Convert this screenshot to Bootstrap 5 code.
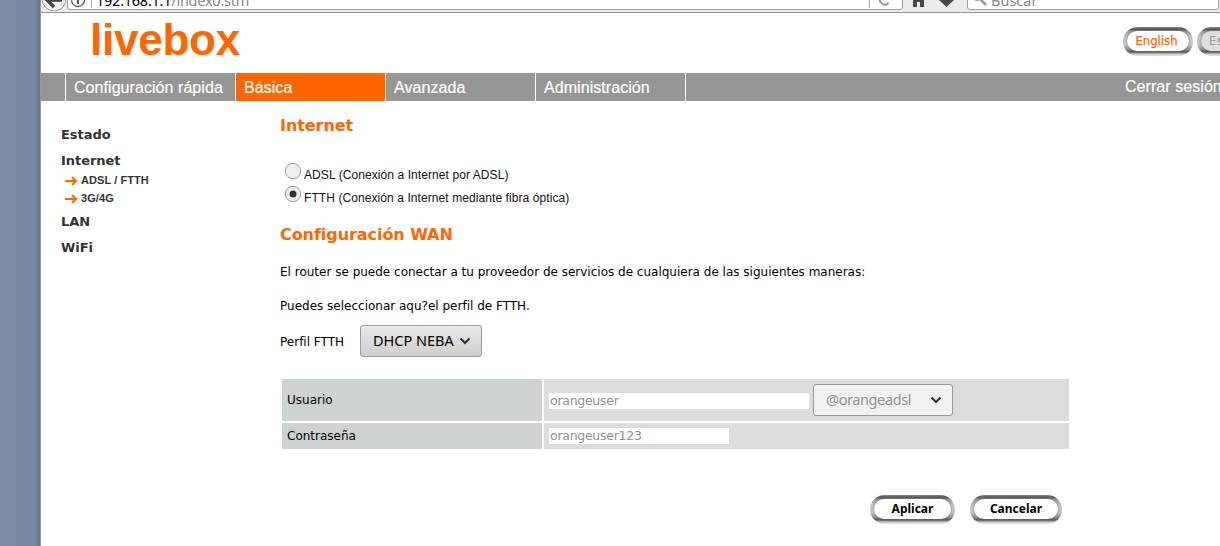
<!DOCTYPE html>
<html lang="es">
<head>
<meta charset="utf-8">
<title>livebox</title>
<link href="https://cdn.jsdelivr.net/npm/bootstrap@5.3.0/dist/css/bootstrap.min.css" rel="stylesheet">
<style>
body{height:546px;overflow:hidden;background:linear-gradient(90deg,#7b8ca8 0,#7788a2 34px,#697990 40px);font-family:"DejaVu Sans",sans-serif;font-size:12px;color:#000;line-height:16px}
.window{margin-left:40px;width:1180px;height:546px;border-left:1px solid #9a9a9a;background:#fff;overflow:hidden}
.chrome{height:13px;overflow:hidden;background:#ebebe9;border-bottom:1px solid #929292}
.bar-row{height:36px;margin-top:-25px;font:14.5px/30px "Noto Sans",sans-serif;color:#888}
.field{height:35px;background:#fff;border:1px solid #a0a09c;border-radius:3px;padding-top:9px}
.addr{margin-left:-7px;letter-spacing:-.25px}
.head{height:60px;padding-left:49px}
.logo{font:bold 44px/50px "Liberation Sans",sans-serif;color:#f60;letter-spacing:-.25px;padding-top:2px}
.pill{height:29px;border-radius:15px;background:linear-gradient(#888 0,#555 8%,#999 16%,#c4c4c4 35%,#c4c4c4 62%,#888 78%,#555 86%,#c4c4c4 93%,#e6e6e6);padding:4px 4px 5px}
.pill span{display:block;height:20px;border-radius:10px;background:#fff;line-height:20px;text-align:center;box-shadow:0 0 2px #666}
.lang{font-size:11.7px;margin:14px -47px 0 0;gap:4px}
.lang .pill{width:70px}
.lang .here{color:#f60;-webkit-text-stroke:.25px #f60;padding-right:3px}
.lang .other{background:#dedede;color:#999}
.menubar{height:28px;background:#969696;font:16px/30px "Liberation Sans",sans-serif;color:#fff;margin-left:-1px;letter-spacing:.06px;-webkit-text-stroke:.2px #fff}
.menubar a{color:#fff;text-decoration:none;width:150px;padding-left:8px;border-right:1px solid #fff;white-space:nowrap}
.menubar a:first-of-type{width:170px}
.menubar .edge{width:26px;border-right:1px solid #fff}
.menubar a.on{background:#f60}
.menubar .exit{width:95px;line-height:28px}
.side{width:239px;padding:21px 0 0 20px;color:#333}
.side .top-item{font-weight:bold;font-size:13px;height:26px;line-height:26px;letter-spacing:-.05px}
.side .subs{margin:-3px 0 2px 4px}
.side .sub-item{font:bold 11px/18px "Liberation Sans",sans-serif;height:18px;letter-spacing:.07px}
.main{width:790px}
h2{font-size:16px;font-weight:bold;color:#f60;margin:0;line-height:20px;letter-spacing:-.06px}
.choice{height:23px;font:12px/23px "Liberation Sans",sans-serif;padding-left:5px;color:#111;letter-spacing:.08px}
.choice svg{margin-right:2px}
.choice span{padding-top:5px}
.combo{height:32px;border:1px solid #9a9a98;border-radius:3px;background:linear-gradient(#e9e9e8,#cececd);font:14.5px/28px "Noto Sans",sans-serif;padding:0 10px 0 12px}
.combo span{padding-bottom:2px}
.combo.off{background:#f0f0f0;color:#929595;letter-spacing:-.4px}
.grid-rows{width:787px;margin:22px 0 0 2px;gap:2px}
.lab{width:260px;background:#ced2d1;padding-left:5px}
.val{width:525px;background:#dcdcdc;padding-left:5px}
.box{height:16px;background:#fff;color:#8d9191;font-size:12.5px;line-height:16px;padding-left:1px;letter-spacing:-.27px}
.act{font:bold 12px/20px "Noto Sans",sans-serif;color:#000;margin-top:46px;gap:15px;padding-right:8px}
</style>
</head>
<body>
<div class="window">
 <div class="chrome"><div class="bar-row d-flex">
  <svg width="26" height="36" viewBox="0 0 26 36"><circle cx="13" cy="24" r="12" fill="#f0f0ef" stroke="#999"/><path d="M13 18l-7 7 7 7M6 25h15" stroke="#444" stroke-width="3.4" fill="none"/></svg>
  <div class="field d-flex" style="width:836px">
   <svg width="35" height="26" viewBox="0 0 35 26" class="flex-shrink-0"><circle cx="10" cy="15" r="6.500" fill="none" stroke="#555" stroke-width="1.300"/><path d="M10 12v7" stroke="#555" stroke-width="2"/><path d="M23.500 0v23" stroke="#aaa"/></svg>
   <div class="addr"><span class="text-black">192.168.1.1</span>/index0.stm</div>
   <svg class="ms-auto" width="35" height="26" viewBox="0 0 35 26"><path d="M2.500 0v23" stroke="#aaa"/><path d="M13.500 12a5 5 0 0 0 0 5q4 5 8 1" fill="none" stroke="#8595a8" stroke-width="2"/></svg>
  </div>
  <svg width="63" height="36" viewBox="0 0 63 36"><path d="M10 23h11v9h-4v-5h-3v5h-4zM36 25h15l-7.500 7z" fill="#484848"/></svg>
  <div class="field d-flex" style="width:252px;margin-left:1px"><svg width="23" height="26" viewBox="0 0 23 26" class="flex-shrink-0"><circle cx="9" cy="11" r="4" fill="none" stroke="#999" stroke-width="2"/><path d="M12 14l6 6" stroke="#999" stroke-width="2.500"/></svg><span>Buscar</span></div>
 </div></div>
 <header class="head d-flex">
  <div class="logo">livebox</div>
  <div class="d-flex ms-auto lang">
   <div class="pill"><span class="here">English</span></div>
   <div class="pill"><span class="other">Español</span></div>
  </div>
 </header>
 <nav class="menubar d-flex"><div class="edge"></div><a href="#">Configuración rápida</a><a href="#" class="on">Básica</a><a href="#">Avanzada</a><a href="#">Administración</a><span class="exit ms-auto text-nowrap">Cerrar sesión</span></nav>
 <div class="d-flex">
  <aside class="side">
   <div class="top-item">Estado</div><div class="top-item">Internet</div>
   <div class="subs">
    <div class="sub-item d-flex align-items-center"><svg width="16" height="12" viewBox="0 0 16 12"><path d="M0 7h11M7 3l4 4-4 4" fill="none" stroke="#f60" stroke-width="2"/></svg>ADSL / FTTH</div>
    <div class="sub-item d-flex align-items-center"><svg width="16" height="12" viewBox="0 0 16 12"><path d="M0 7h11M7 3l4 4-4 4" fill="none" stroke="#f60" stroke-width="2"/></svg>3G/4G</div>
   </div>
   <div class="top-item">LAN</div><div class="top-item">WiFi</div>
  </aside>
  <main class="main">
   <h2 style="padding-top:15px">Internet</h2>
   <div style="padding-top:23px">
    <div class="choice d-flex"><svg width="17" height="23" viewBox="0 0 17 23"><circle cx="8" cy="12" r="7.700" fill="#efefee" stroke="#9c9c9c"/></svg><span>ADSL (Conexión a Internet por ADSL)</span></div>
    <div class="choice d-flex"><svg width="17" height="23" viewBox="0 0 17 23"><circle cx="8" cy="12" r="7.700" fill="#efefee" stroke="#9c9c9c"/><circle cx="8" cy="12" r="3.500" fill="#2e3436"/></svg><span>FTTH (Conexión a Internet mediante fibra óptica)</span></div>
   </div>
   <h2 style="padding-top:20px">Configuración WAN</h2>
   <div style="padding-top:19px">El router se puede conectar a tu proveedor de servicios de cualquiera de las siguientes maneras:</div>
   <div style="padding-top:18px">Puedes seleccionar aqu?el perfil de FTTH.</div>
   <div class="d-flex align-items-center" style="padding-top:11px"><span style="width:80px;padding-top:2px">Perfil FTTH</span>
    <div class="combo d-flex align-items-center justify-content-between" style="width:122px"><span>DHCP NEBA</span><svg width="12" height="10" viewBox="0 0 12 10"><path d="M1.500 2.500l4.500 4.500 4.500-4.500" fill="none" stroke="#2e3436" stroke-width="2"/></svg></div></div>
   <div class="grid-rows d-flex flex-column">
    <div class="d-flex" style="height:42px;gap:2px"><div class="lab d-flex align-items-center">Usuario</div><div class="val d-flex align-items-center"><div class="box" style="width:260px;margin-top:2px">orangeuser</div><div class="combo off d-flex align-items-center justify-content-between" style="width:140px;margin-left:4px"><span>@orangeadsl</span><svg width="12" height="10" viewBox="0 0 12 10"><path d="M1.500 2.500l4.500 4.500 4.500-4.500" fill="none" stroke="#2e3436" stroke-width="2"/></svg></div></div></div>
    <div class="d-flex" style="height:26px;gap:2px"><div class="lab d-flex align-items-center">Contraseña</div><div class="val d-flex align-items-center"><div class="box" style="width:180px">orangeuser123</div></div></div>
   </div>
   <div class="d-flex justify-content-end act"><div class="pill" style="width:85px"><span>Aplicar</span></div><div class="pill" style="width:92px"><span>Cancelar</span></div></div>
  </main>
 </div>
</div>
<script src="https://cdn.jsdelivr.net/npm/bootstrap@5.3.0/dist/js/bootstrap.bundle.min.js"></script>
</body>
</html>
